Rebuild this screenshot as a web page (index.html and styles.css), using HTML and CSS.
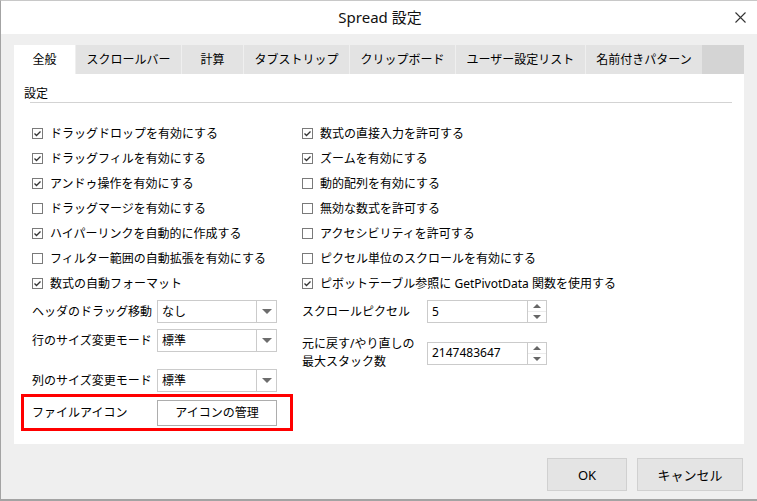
FILE: index.html
```html
<!DOCTYPE html>
<html lang="ja">
<head>
<meta charset="utf-8">
<title>Spread 設定</title>
<link rel="stylesheet" href="styles.css">
</head>
<body>
<div class="window">
  <div class="titlebar">
    <span></span>
    <span class="title">Spread 設定</span>
    <span class="close"><svg width="11" height="11" viewBox="0 0 11 11"><path d="M0.5 0.5 L10.5 10.5 M10.5 0.5 L0.5 10.5" stroke="#333" stroke-width="1.1" fill="none"/></svg></span>
  </div>
  <div class="content">
    <div class="tabs">
      <div class="tab active">全般</div>
      <div class="tab">スクロールバー</div>
      <div class="tab">計算</div>
      <div class="tab">タブストリップ</div>
      <div class="tab">クリップボード</div>
      <div class="tab">ユーザー設定リスト</div>
      <div class="tab">名前付きパターン</div>
      <div class="tab-fill"></div>
    </div>
    <div class="panel">
      <div class="section-title">設定</div>
      <div class="rule"></div>
      <div class="checks">
        <label class="check"><span class="cb on"><svg width="11" height="11" viewBox="0 0 11 11"><path d="M2.5 5.5 L4.5 7.5 L8.5 3.5" fill="none" stroke="#333" stroke-width="1.3"/></svg></span>ドラッグドロップを有効にする</label>
        <label class="check"><span class="cb on"><svg width="11" height="11" viewBox="0 0 11 11"><path d="M2.5 5.5 L4.5 7.5 L8.5 3.5" fill="none" stroke="#333" stroke-width="1.3"/></svg></span>数式の直接入力を許可する</label>
        <label class="check"><span class="cb on"><svg width="11" height="11" viewBox="0 0 11 11"><path d="M2.5 5.5 L4.5 7.5 L8.5 3.5" fill="none" stroke="#333" stroke-width="1.3"/></svg></span>ドラッグフィルを有効にする</label>
        <label class="check"><span class="cb on"><svg width="11" height="11" viewBox="0 0 11 11"><path d="M2.5 5.5 L4.5 7.5 L8.5 3.5" fill="none" stroke="#333" stroke-width="1.3"/></svg></span>ズームを有効にする</label>
        <label class="check"><span class="cb on"><svg width="11" height="11" viewBox="0 0 11 11"><path d="M2.5 5.5 L4.5 7.5 L8.5 3.5" fill="none" stroke="#333" stroke-width="1.3"/></svg></span>アンドゥ操作を有効にする</label>
        <label class="check"><span class="cb"></span>動的配列を有効にする</label>
        <label class="check"><span class="cb"></span>ドラッグマージを有効にする</label>
        <label class="check"><span class="cb"></span>無効な数式を許可する</label>
        <label class="check"><span class="cb on"><svg width="11" height="11" viewBox="0 0 11 11"><path d="M2.5 5.5 L4.5 7.5 L8.5 3.5" fill="none" stroke="#333" stroke-width="1.3"/></svg></span>ハイパーリンクを自動的に作成する</label>
        <label class="check"><span class="cb"></span>アクセシビリティを許可する</label>
        <label class="check"><span class="cb"></span>フィルター範囲の自動拡張を有効にする</label>
        <label class="check"><span class="cb"></span>ピクセル単位のスクロールを有効にする</label>
        <label class="check"><span class="cb on"><svg width="11" height="11" viewBox="0 0 11 11"><path d="M2.5 5.5 L4.5 7.5 L8.5 3.5" fill="none" stroke="#333" stroke-width="1.3"/></svg></span>数式の自動フォーマット</label>
        <label class="check"><span class="cb on"><svg width="11" height="11" viewBox="0 0 11 11"><path d="M2.5 5.5 L4.5 7.5 L8.5 3.5" fill="none" stroke="#333" stroke-width="1.3"/></svg></span>ピボットテーブル参照に GetPivotData 関数を使用する</label>
      </div>
      <div class="lower">
        <div class="col col-left">
          <div class="field">
            <span class="label">ヘッダのドラッグ移動</span>
            <div class="select"><span class="value">なし</span><span class="arrow"><span class="tri-down"></span></span></div>
          </div>
          <div class="field gap-s">
            <span class="label">行のサイズ変更モード</span>
            <div class="select"><span class="value">標準</span><span class="arrow"><span class="tri-down"></span></span></div>
          </div>
          <div class="field gap-l">
            <span class="label">列のサイズ変更モード</span>
            <div class="select"><span class="value">標準</span><span class="arrow"><span class="tri-down"></span></span></div>
          </div>
          <div class="field file-icon">
            <span class="label">ファイルアイコン</span>
            <button class="icon-btn">アイコンの管理</button>
          </div>
        </div>
        <div class="col col-right">
          <div class="field">
            <span class="label">スクロールピクセル</span>
            <div class="spinner"><span class="value">5</span><span class="spin"><span class="spin-half"><span class="tri-up"></span></span><span class="spin-half lower-half"><span class="tri-down small"></span></span></span></div>
          </div>
          <div class="field gap-m">
            <span class="label two-line">元に戻す/やり直しの<br>最大スタック数</span>
            <div class="spinner"><span class="value">2147483647</span><span class="spin"><span class="spin-half"><span class="tri-up"></span></span><span class="spin-half lower-half"><span class="tri-down small"></span></span></span></div>
          </div>
        </div>
      </div>
    </div>
    <div class="footer">
      <button class="btn ok">OK</button>
      <button class="btn cancel">キャンセル</button>
    </div>
  </div>
</div>
</body>
</html>
```
FILE: styles.css
```css
* { box-sizing: border-box; }
html, body { margin: 0; padding: 0; }
body {
  font-family: "Noto Sans", "Noto Sans CJK JP", sans-serif;
  font-size: 12px;
  line-height: 18px;
  color: #000;
  background: #efefef;
}
.window {
  width: 757px;
  height: 501px;
  background: #efefef;
  border-left: 1px solid #a3a3a3;
  border-top: 1px solid #c8c8c8;
  border-bottom: 2px solid #a3a3a3;
  display: flex;
  flex-direction: column;
}
.titlebar {
  height: 33px;
  background: #fff;
  display: grid;
  grid-template-columns: 1fr auto 1fr;
  align-items: center;
}
.title {
  font-size: 15px;
  line-height: 20px;
  color: #111;
  padding-left: 2px;
  margin-top: -2px;
}
.close {
  justify-self: end;
  margin-right: 11px;
  display: flex;
  align-items: center;
  height: 11px;
}
.content {
  padding: 11px 13px 0 13px;
  display: flex;
  flex-direction: column;
}
.tabs {
  display: flex;
  height: 29px;
}
.tab {
  min-width: 61px;
  padding: 0 10.5px;
  margin-right: 1px;
  background: #e3e3e3;
  display: flex;
  align-items: center;
  justify-content: center;
  white-space: nowrap;
}
.tab.active { background: #fff; }
.tab-fill {
  flex: 1;
  background: #d4d4d4;
  margin-left: -1px;
}
.panel {
  background: #fff;
  height: 370px;
  padding: 11px 12px 0 10px;
}
.section-title {
  height: 17px;
}
.rule {
  height: 1px;
  background: #d3d3d3;
  margin-left: 6px;
}
.checks {
  margin: 18px 0 0 8px;
  display: grid;
  grid-template-columns: 270px auto;
  grid-auto-rows: 25px;
}
.check {
  display: flex;
  align-items: center;
  gap: 7px;
  white-space: nowrap;
}
.cb {
  width: 11px;
  height: 11px;
  border: 1px solid #7a7a7a;
  background: #fff;
  flex: none;
  position: relative;
}
.cb svg {
  position: absolute;
  left: -1px;
  top: -1px;
}
.lower {
  margin: 4px 0 0 8px;
  display: flex;
}
.col-left { width: 270px; }
.field {
  display: flex;
  align-items: center;
}
.gap-s { margin-top: 6px; }
.gap-m { margin-top: 12px; }
.gap-l { margin-top: 17px; }
.label {
  width: 125px;
  flex: none;
  white-space: nowrap;
}
.select, .spinner {
  width: 120px;
  height: 23px;
  border: 1px solid #cbcbcb;
  background: #fff;
  display: flex;
}
.value {
  flex: 1;
  padding-left: 4px;
  display: flex;
  align-items: center;
}
.arrow {
  width: 20px;
  border-left: 1px solid #cbcbcb;
  display: flex;
  align-items: center;
  justify-content: center;
}
.tri-down {
  width: 0;
  height: 0;
  border-left: 5px solid transparent;
  border-right: 5px solid transparent;
  border-top: 5px solid #6d6d6d;
}
.tri-down.small {
  border-left-width: 4px;
  border-right-width: 4px;
  border-top: 4px solid #666;
}
.tri-up {
  width: 0;
  height: 0;
  border-left: 4px solid transparent;
  border-right: 4px solid transparent;
  border-bottom: 4px solid #666;
}
.spin {
  width: 19px;
  border-left: 1px solid #cbcbcb;
  display: flex;
  flex-direction: column;
}
.spin-half {
  flex: 1;
  display: flex;
  align-items: center;
  justify-content: center;
}
.lower-half { border-top: 1px solid #ececec; }
.file-icon {
  margin: 2px 0 0 -11px;
  width: 272px;
  height: 37px;
  border: 3px solid #ff0000;
  padding-left: 8px;
}
.icon-btn {
  width: 120px;
  height: 26px;
  border: 1px solid #adadad;
  background: #fff;
  font: inherit;
  color: #000;
  padding: 0;
}
.footer {
  display: flex;
  justify-content: flex-end;
  gap: 10px;
  margin-top: 14px;
  padding-right: 1px;
}
.btn {
  height: 33px;
  border: 1px solid #d0d0d0;
  background: #e4e4e4;
  font-family: inherit;
  font-size: 13px;
  color: #000;
  padding: 0;
}
.btn.ok { width: 80px; }
.btn.cancel { width: 106px; }
```
